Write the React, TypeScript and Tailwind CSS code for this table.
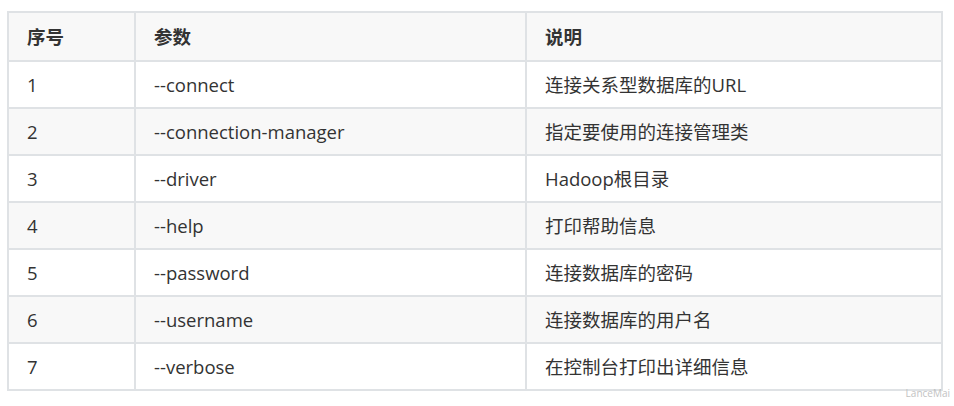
const rows = [
  { id: "1", param: "--connect", desc: "连接关系型数据库的URL" },
  { id: "2", param: "--connection-manager", desc: "指定要使用的连接管理类" },
  { id: "3", param: "--driver", desc: "Hadoop根目录" },
  { id: "4", param: "--help", desc: "打印帮助信息" },
  { id: "5", param: "--password", desc: "连接数据库的密码" },
  { id: "6", param: "--username", desc: "连接数据库的用户名" },
  { id: "7", param: "--verbose", desc: "在控制台打印出详细信息" },
];

export default function App() {
  return (
    <div
      className="relative w-[954px] h-[406px] bg-white pl-[7px] pt-[11px] text-[#333333]"
      style={{ fontFamily: '"Open Sans", "Noto Sans CJK SC", sans-serif' }}
    >
      <table className="table-fixed w-[936px] border-separate border-spacing-0 border-l-2 border-t-2 border-[#dfe2e5] text-[18.5px]">
        <colgroup>
          <col className="w-[127px]" />
          <col className="w-[391px]" />
          <col className="w-[416px]" />
        </colgroup>
        <thead>
          <tr className="bg-[#f8f8f8]">
            <th className="text-left font-bold pl-[18px] py-[11px] leading-[25px] border-r-2 border-b-2 border-[#dfe2e5]">序号</th>
            <th className="text-left font-bold pl-[18px] py-[11px] leading-[25px] border-r-2 border-b-2 border-[#dfe2e5]">参数</th>
            <th className="text-left font-bold pl-[18px] py-[11px] leading-[25px] border-r-2 border-b-2 border-[#dfe2e5]">说明</th>
          </tr>
        </thead>
        <tbody>
          {rows.map((r, i) => (
            <tr key={r.id} className={i % 2 === 1 ? "bg-[#f8f8f8]" : "bg-white"}>
              <td className="pl-[18px] py-[10px] leading-[25px] border-r-2 border-b-2 border-[#dfe2e5]">{r.id}</td>
              <td className="pl-[18px] py-[10px] leading-[25px] border-r-2 border-b-2 border-[#dfe2e5]">{r.param}</td>
              <td className="pl-[18px] py-[10px] leading-[25px] border-r-2 border-b-2 border-[#dfe2e5]">{r.desc}</td>
            </tr>
          ))}
        </tbody>
      </table>
      <span className="absolute right-[4px] top-[386px] text-[10px] text-[#c2c2c2]">LanceMai</span>
    </div>
  );
}
